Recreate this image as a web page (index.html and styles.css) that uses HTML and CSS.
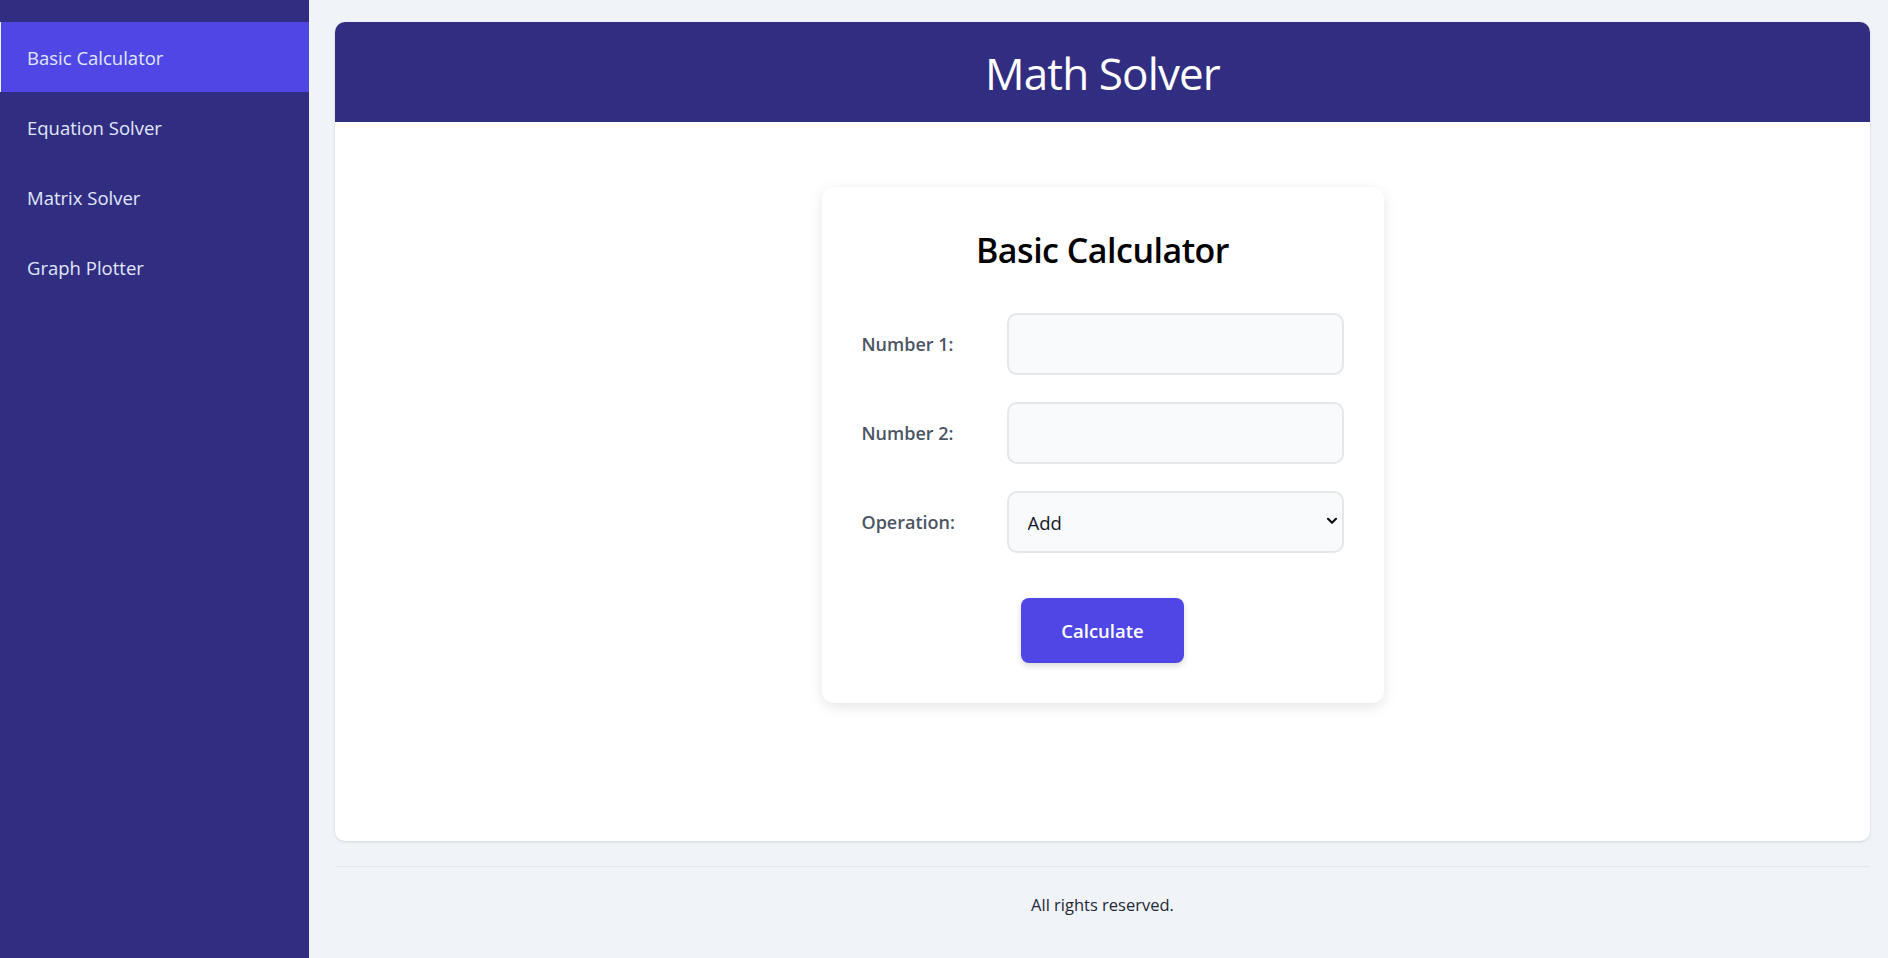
FILE: index.html
```html
<!DOCTYPE html>
<html lang="en">
<head>
<meta charset="utf-8">
<title>Math Solver</title>
<link rel="stylesheet" href="styles.css">
</head>
<body>
<div class="app">
  <nav class="sidebar">
    <a class="nav-item active" href="#">Basic Calculator</a>
    <a class="nav-item" href="#">Equation Solver</a>
    <a class="nav-item" href="#">Matrix Solver</a>
    <a class="nav-item" href="#">Graph Plotter</a>
  </nav>
  <main class="main">
    <section class="panel">
      <header class="panel-header">
        <h1 class="panel-title">Math Solver</h1>
      </header>
      <div class="panel-body">
        <div class="calc-card">
          <h2 class="calc-title">Basic Calculator</h2>
          <form class="calc-form">
            <div class="form-row">
              <label class="form-label" for="n1">Number 1:</label>
              <input class="form-control" id="n1" type="text">
            </div>
            <div class="form-row">
              <label class="form-label" for="n2">Number 2:</label>
              <input class="form-control" id="n2" type="text">
            </div>
            <div class="form-row">
              <label class="form-label" for="op">Operation:</label>
              <div class="select-wrap">
                <select class="form-control form-select" id="op">
                  <option>Add</option>
                  <option>Subtract</option>
                  <option>Multiply</option>
                  <option>Divide</option>
                </select>
                <svg class="select-chevron" width="12" height="8" viewBox="0 0 12 8" aria-hidden="true"><path d="M2 1.8 L6 5.8 L10 1.8" fill="none" stroke="#111" stroke-width="2.2" stroke-linecap="round" stroke-linejoin="round"/></svg>
              </div>
            </div>
            <div class="actions">
              <button class="btn-primary" type="button">Calculate</button>
            </div>
          </form>
        </div>
      </div>
    </section>
    <footer class="footer">
      <p class="footer-text">All rights reserved.</p>
    </footer>
  </main>
</div>
</body>
</html>
```
FILE: styles.css
```css
* {
  box-sizing: border-box;
}

body {
  margin: 0;
  background: #f0f3f8;
  font-family: "Open Sans", "Noto Sans", "Liberation Sans", sans-serif;
  color: #1f2937;
}

.app {
  display: flex;
  min-height: 100vh;
}

.sidebar {
  flex: none;
  width: 309px;
  min-height: 100vh;
  background: #312e81;
  padding-top: 22px;
  display: flex;
  flex-direction: column;
}

.nav-item {
  display: flex;
  align-items: center;
  height: 70px;
  padding-left: 27px;
  color: #e0e7ff;
  font-size: 18.5px;
  text-decoration: none;
}

.nav-item.active {
  background: #4f46e5;
  border-left: 1px solid #eef0ff;
  padding-left: 26px;
}

.main {
  flex: 1;
  padding: 22px 18px 0 26px;
}

.panel {
  background: #ffffff;
  border-radius: 10px;
  box-shadow: 0 1px 3px rgba(0, 0, 0, 0.12);
  overflow: hidden;
}

.panel-header {
  height: 100px;
  background: #312e81;
  display: flex;
  align-items: center;
  justify-content: center;
  padding-top: 3px;
}

.panel-title {
  margin: 0;
  color: #ffffff;
  font-size: 44px;
  font-weight: 400;
  letter-spacing: -0.02em;
  line-height: 1.2;
}

.panel-body {
  display: flex;
  justify-content: center;
  padding: 65px 0 138px;
}

.calc-card {
  width: 562px;
  padding: 40px;
  background: #ffffff;
  border-radius: 12px;
  box-shadow: 0 4px 14px rgba(0, 0, 0, 0.1);
}

.calc-title {
  margin: 2px 0 41px;
  text-align: center;
  font-size: 34px;
  font-weight: 600;
  line-height: 43px;
  color: #000000;
  letter-spacing: -0.015em;
}

.calc-form {
  display: flex;
  flex-direction: column;
  gap: 27px;
}

.form-row {
  display: flex;
  align-items: center;
}

.form-label {
  flex: none;
  width: 145px;
  font-size: 18px;
  font-weight: 600;
  color: #4b5563;
}

.form-control {
  width: 337px;
  height: 62px;
  border: 2px solid #e5e7eb;
  border-radius: 10px;
  background: #f9fafb;
  font-family: inherit;
  font-size: 18.5px;
  color: #111827;
  padding: 0 19px;
  outline: none;
}

.select-wrap {
  position: relative;
  width: 337px;
}

.form-select {
  appearance: none;
  -webkit-appearance: none;
}

.select-chevron {
  position: absolute;
  right: 6px;
  top: 26px;
  pointer-events: none;
}

.actions {
  display: flex;
  justify-content: center;
  margin-top: 18px;
}

.btn-primary {
  width: 163px;
  height: 65px;
  border: none;
  border-radius: 8px;
  background: #4f46e5;
  color: #ffffff;
  font-family: inherit;
  font-size: 18.5px;
  font-weight: 600;
  box-shadow: 0 3px 6px rgba(0, 0, 0, 0.15);
  cursor: pointer;
}

.footer {
  margin-top: 25px;
  border-top: 1px solid #e2e6ee;
  padding-top: 26px;
  text-align: center;
}

.footer-text {
  margin: 0;
  font-size: 16.5px;
  color: #1f2937;
}
```
